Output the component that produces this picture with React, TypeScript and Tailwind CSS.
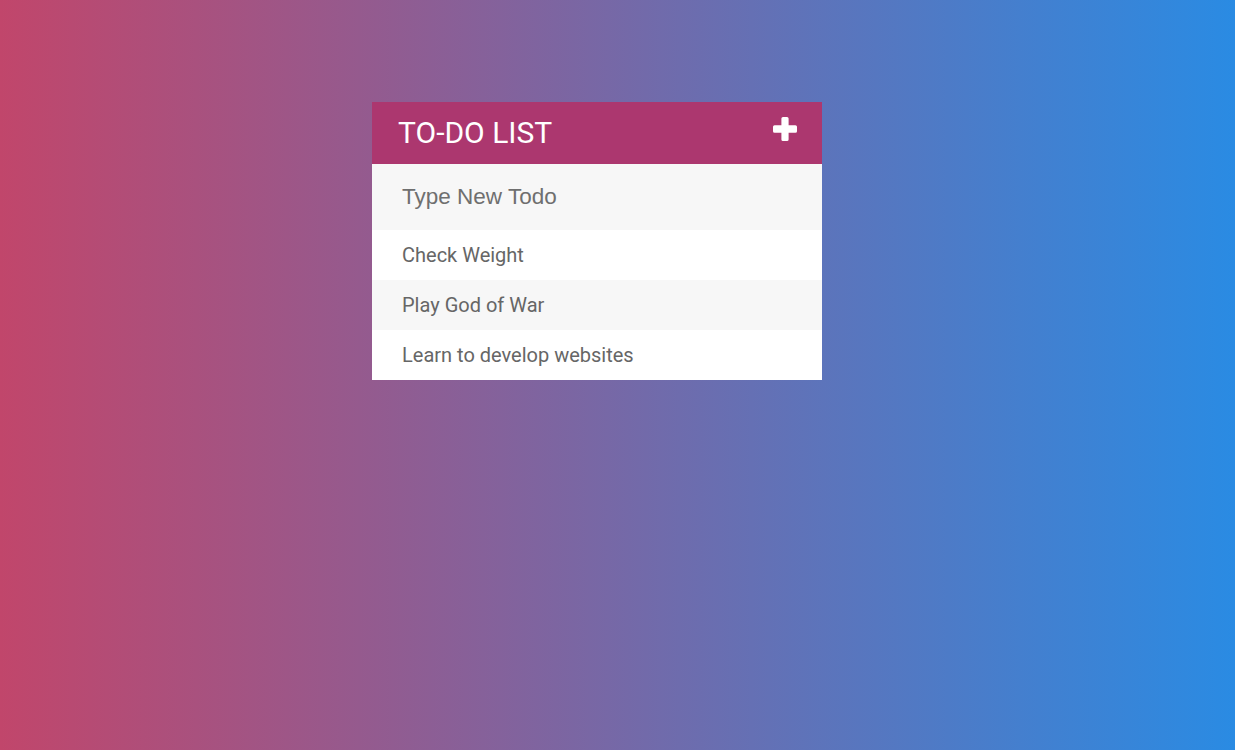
import React from "react";

function PlusIcon() {
  return (
    <svg width="24" height="24" viewBox="0 0 24 24" fill="white" aria-hidden="true" className="mb-[8px]">
      <path d="M10 0h4a1.6 1.6 0 0 1 1.6 1.6V8.2h6.8A1.6 1.6 0 0 1 24 9.8v4.4a1.6 1.6 0 0 1-1.6 1.6h-6.8v6.6A1.6 1.6 0 0 1 14 24h-4a1.6 1.6 0 0 1-1.6-1.6v-6.6H1.6A1.6 1.6 0 0 1 0 14.2V9.8a1.6 1.6 0 0 1 1.6-1.6h6.8V1.6A1.6 1.6 0 0 1 10 0z" />
    </svg>
  );
}

export default function App() {
  const todos = ["Check Weight", "Play God of War", "Learn to develop websites"];
  return (
    <div className="min-h-[750px] w-full bg-[linear-gradient(to_right,#c1466b,#2a8be3)] font-['Roboto',sans-serif]">
      <div className="pl-[372px] pt-[102px]">
        <div className="w-[450px] bg-white">
          <div className="flex h-[62px] items-center justify-between bg-[#ac376f] pl-[26px] pr-[25px]">
            <h1 className="text-[30px] font-normal leading-none text-white">TO-DO LIST</h1>
            <PlusIcon />
          </div>
          <input
            type="text"
            placeholder="Type New Todo"
            className="block h-[66px] w-full bg-[#f7f7f7] pl-[30px] font-['Liberation_Sans',Arial,sans-serif] text-[22.5px] text-[#666] outline-none placeholder:text-[#6f6f6f]"
          />
          <ul>
            {todos.map((t, i) => (
              <li
                key={t}
                className={`flex h-[50px] items-center pl-[30px] text-[20px] text-[#666] ${i % 2 === 1 ? "bg-[#f7f7f7]" : "bg-white"}`}
              >
                {t}
              </li>
            ))}
          </ul>
        </div>
      </div>
    </div>
  );
}
